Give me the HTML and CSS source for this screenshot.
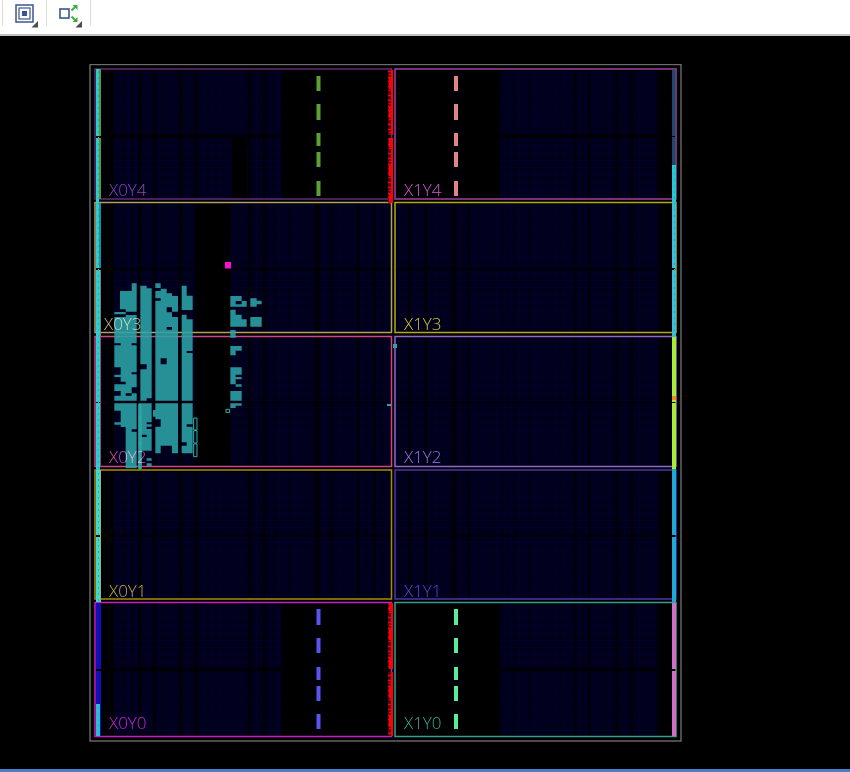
FILE: index.html
```html
<!DOCTYPE html>
<html lang="en">
<head>
<meta charset="utf-8">
<title>Device</title>
<link rel="stylesheet" href="styles.css">
</head>
<body>
<header class="toolbar">
  <button class="tool" type="button" aria-label="Fit view">
    <svg width="26" height="28" viewBox="0 0 26 28">
      <g class="ink"><rect x="4" y="5" width="17" height="17" stroke-width="1.5"/><rect x="7" y="8" width="11" height="11" stroke-width="1.2"/></g>
      <rect class="ink-fill" x="10" y="11" width="5" height="5"/>
      <path class="corner" d="M26 21V27.500H19.500Z"/>
    </svg>
  </button>
  <button class="tool" type="button" aria-label="Show connections">
    <svg width="26" height="28" viewBox="0 0 26 28">
      <rect class="ink" x="4" y="9" width="9" height="9" stroke-width="1.6"/>
      <g class="arrow"><path d="M15.500 10.500l4-4M15.500 16.500l4 4" stroke-width="2"/><path class="arrow-head" d="M16.500 5H21.500V10zM21.500 17V22H16.500z"/></g>
      <path class="corner" d="M26 21V27.500H19.500Z"/>
    </svg>
  </button>
</header>
<main class="canvas">
<svg class="device" viewBox="89 64 593 678">
  <defs>
    <pattern id="grid" x="99" y="70" width="15" height="15" patternUnits="userSpaceOnUse">
      <rect width="15" height="15" fill="#000016"/>
      <path d="M3.500 0V15M11.500 0V15M0 3.500H15M0 11.500H15" stroke="#00001e"/>
      <path d="M0 .5H15M0 7.500H15M.5 0V15M7.500 0V15" stroke="#00002e"/>
    </pattern>
    <pattern id="io" x="99" y="70" width="19" height="8" patternUnits="userSpaceOnUse"><path d="M2 2.500H7M2 6.500H6M9.500 0V8" stroke="#00001c" fill="none"/></pattern>
    <pattern id="red" x="388" y="70" width="5" height="29" patternUnits="userSpaceOnUse">
      <rect width="5" height="29" fill="#50001c"/>
      <path d="M0 1.500H4M1 4.500H5M0 7.500H5M0 11.500H4M0 16.500H5M1 20.500H5M0 25.500H4" stroke="#fa0008" stroke-width="1.500"/>
      <path d="M2 8V19" stroke="#ff0008" stroke-width="2"/>
      <path d="M4 0V29" stroke="#ff0008" stroke-width="2"/>
    </pattern>
    <pattern id="speck" x="96" y="70" width="4" height="6" patternUnits="userSpaceOnUse"><path d="M2 1h1v2H2z" fill="#20b0bc"/></pattern>
  </defs>

  <rect x="89" y="64" width="593" height="678" fill="#000"/>
  <rect x="90" y="64.500" width="591" height="676.500" class="frame"/>

  <!-- logic fabric -->
  <g fill="url(#grid)">
    <path d="M114 71H282V198H114zM500 71H657V198H500z"/>
    <path d="M114 204H197V332H114zM230 204H390V332H230zM396 204H658V332H396z"/>
    <path d="M114 338H197V465H114zM230 338H390V465H230zM396 338H658V465H396z"/>
    <path d="M114 472H390V598H114zM396 472H658V598H396z"/>
    <path d="M114 604H282V735H114zM500 604H657V735H500z"/>
  </g>
  <path fill="url(#io)" d="M99 70H114V736H99zM658 70H672V736H658z"/>
  <g class="gap">
    <path d="M139.500 70V736M154.500 70V736M180.500 70V736M195.500 70V736M249.500 70V736M264.500 70V736M631.500 70V736M617 70V736" stroke-width="3"/>
    <path d="M575.500 70V736M588.500 70V736M468.500 203V599M331.500 203V599" stroke-width="2"/>
    <path d="M317 203V599M454 203V599" stroke-width="5"/>
    <path d="M358.500 203V599M374.500 203V599M409.500 203V599M425.500 203V599" stroke-width="3"/>
    <path d="M96 136H391M396 136H676M96 669.500H391M396 669.500H676" stroke-width="4"/>
    <path d="M96 269H391M396 269H676M96 402.500H391M396 402.500H676M96 536H391M396 536H676" stroke-width="2"/>
  </g>
  <path fill="#000" d="M232 138H247V198H232z"/>
  <path d="M231.500 198V150.500H247.500V198M224.500 268V243.500H229M315.500 71V198M321.500 71V198M453.500 71V198M459.500 71V198M315.500 604V735M321.500 604V735M453.500 604V735M459.500 604V735" stroke="#000018" fill="none"/>

  <!-- clock columns -->
  <g stroke-width="4" fill="none">
    <path stroke="#5ca034" d="M318.500 76V91M318.500 104V120M318.500 133V146M318.500 152V167M318.500 181V196"/>
    <path stroke="#e08484" d="M456 76V91M456 104V120M456 133V146M456 152V167M456 181V196"/>
    <path stroke="#5854ec" d="M318.500 609V625M318.500 638V653M318.500 667V680M318.500 686V701M318.500 714V729"/>
    <path stroke="#5cec98" d="M456 609V625M456 638V653M456 667V680M456 686V701M456 714V729"/>
  </g>

  <!-- clock region outlines -->
  <g class="region">
    <rect x="95" y="69" width="296.500" height="130" stroke="#5e2e76"/>
    <rect x="395" y="69" width="281" height="130" stroke="#a040a6"/>
    <rect x="95" y="202.500" width="296.500" height="130" stroke="#b0a064"/>
    <rect x="395" y="202.500" width="281" height="130" stroke="#b0aa0c"/>
    <rect x="95" y="336.500" width="296.500" height="130" stroke="#d0468e"/>
    <rect x="395" y="336.500" width="281" height="130" stroke="#8e68d4"/>
    <rect x="95" y="470" width="296.500" height="129" stroke="#a48e0c"/>
    <rect x="395" y="470" width="281" height="129" stroke="#4c34ac"/>
    <rect x="95" y="602.500" width="296.500" height="134" stroke="#c81cc4"/>
    <rect x="395" y="602.500" width="281" height="134" stroke="#34a08c"/>
  </g>
  <path fill="url(#red)" d="M388 70H393V135H388zM388 138H393V203H388zM388 603H393V669H388zM388 672H393V736H388z"/>

  <!-- I/O banks -->
  <g>
    <path fill="#2cccd0" d="M96 69H99V136H96zM96 138H99V268H96zM96 270H100V402H96zM96 403H100V470H96z"/>
    <path fill="#579a30" d="M99 69H101V136H99zM99 138H101V199H99z"/>
    <path fill="#1890a0" d="M99 203H101V268H99z"/>
    <path fill="#8c7c68" d="M100 270H101V336H100z"/>
    <path fill="#984878" d="M100 337H101V466H100z"/>
    <path fill="#44d8c8" d="M96 470H100V535H96zM96 537H100V602H96z"/>
    <path fill="#a4b070" d="M100 470H101V602H100z"/>
    <path fill="#1010b8" d="M96 603H101V669H96zM96 671H101V736H96z"/>
    <path fill="#2cbcd8" d="M96 704H100V736H96z"/>
    <path fill="#164c66" d="M672 70H675V136H672zM672 137H675V166H672z"/>
    <path fill="#24c8d0" d="M672 165H676V202H672z"/>
    <path fill="#40bcd8" d="M672 202H676V268H672zM672 270H676V337H672z"/>
    <path fill="#a8ec38" d="M672 337H676V402H672zM672 403H676V469H672z"/>
    <path fill="#f08820" d="M672 396H676V400H672z"/>
    <path fill="#20a8d8" d="M672 469H676V535H672zM672 537H676V602H672z"/>
    <path fill="#d070c4" d="M672 603H676V669H672zM672 671H676V736H672z"/>
    <path fill="url(#speck)" d="M96 70H100V602H96zM96 705H100V736H96zM672 166H676V336H672zM672 470H676V602H672z"/>
  </g>

  <!-- placed cells, upper block then lower block, in thirds of a unit -->
  <g class="cells" transform="translate(90 195) scale(.33333)">
    <path d="M125 265H140V350H107V343H90V288H125zM73 351H107V358H73zM107 360H140V405H73V366H107z"/>
    <path d="M151 272H170V280H185V405H151z"/>
    <path d="M196 265H212V279H196zM196 288H212V281H230V295H246V303H264V350H246V337H230V352H246V366H264V405H196V317H212V310H196zM230 396V404H246V396z"/>
    <path d="M275 272H290V302H308V345H275zM275 359H290V373H308V405H275z"/>
    <path d="M421 303H455V318H470V335H421zM437 318V328H455V318zM481 310H500V317H515V328H500V335H481zM421 344H437V359H455V373H470V395H421zM481 366H515V395H481zM421 405H437V428H421z"/>
  </g>
  <g class="cells" transform="translate(90 330) scale(.33333)">
    <path d="M73 0H140V40H125V46H140V127H125V133H140V172H125V190H107V197H125V190H140V212H73V197H92V183H73V163H107V155H92V141H73V134H92V112H73V46H92V40H73z"/>
    <path d="M73 220H140V298H125V305H140V415H107V291H92V284H73V277H92V242H73z"/>
    <path d="M151 0H185V205H170V212H151V118H170V103H151zM145 220H185V277H170V283H185V290H170V297H185V362H155V418H145zM155 314V321H170V314zM170 385H185V392H170zM170 400H185V408H170z"/>
    <path d="M196 0H264V212H196zM212 85V103H230V85zM196 220H264V370H246V347H212V370H196V290H212V268H196V260H189V240H196z"/>
    <path d="M275 0H308V63H290V69H308V212H275zM275 220H308V283H290V290H308V370H275V347H290V337H275z"/>
    <path d="M421 48H455V62H437V76H421zM421 112H455V134H437V141H455V148H437V163H421zM437 163H455V170H437zM421 183H455V212H421zM421 220H455V227H437V234H421z"/>
    <path class="trace" d="M147 224H153V416H147zM147 262H153M147 300H153M147 340H153M311 264H321V300H311zM311 302H321V339H311zM311 342H321V380H311zM408 238H419V247H408z"/>
  </g>
  <path fill="#2aa4aa" d="M393 344H397V348H393zM387 404H391V406H387z"/>
  <path fill="#ff10cc" d="M225 262H231V268.500H225z"/>

  <!-- region names -->
  <g class="names">
    <text x="109" y="196" fill="#8a44a6">X0Y4</text>
    <text x="404" y="196" fill="#d058d8">X1Y4</text>
    <text x="104" y="330" fill="#c8b874">X0Y3</text>
    <text x="404" y="330" fill="#d0c81c">X1Y3</text>
    <text x="109" y="463" fill="#e04ca0">X0Y2</text>
    <text x="404" y="463" fill="#9c74e0">X1Y2</text>
    <text x="109" y="597" fill="#c8ac14">X0Y1</text>
    <text x="404" y="597" fill="#5c42d4">X1Y1</text>
    <text x="109" y="729" fill="#d020d0">X0Y0</text>
    <text x="404" y="729" fill="#3caa94">X1Y0</text>
  </g>
</svg>
</main>
</body>
</html>
```
FILE: styles.css
```css
* { box-sizing: border-box; }
body {
  margin: 0;
  min-height: 100vh;
  display: flex;
  flex-direction: column;
  background: #000;
  font-family: "Open Sans", "Liberation Sans", sans-serif;
}
.toolbar {
  display: flex;
  height: 36px;
  padding-left: 2px;
  background: #fff;
  border-bottom: 2px solid #c0c0c0;
  flex-shrink: 0;
}
.tool {
  display: flex;
  width: 44px;
  height: 26px;
  margin: 0;
  padding: 0 0 0 9px;
  border: 0;
  border-left: 1px solid #dcdcdc;
  background: none;
}
.tool:last-child { width: 45px; border-right: 1px solid #dcdcdc; }
.tool svg { display: block; flex-shrink: 0; }
.ink { fill: none; stroke: #3b558f; }
.ink-fill { fill: #3b558f; }
.corner { fill: #4c4c4c; }
.arrow { stroke: #3cb043; fill: none; }
.arrow-head { fill: #3cb043; stroke: none; }
.canvas {
  flex: 1;
  display: flex;
  justify-content: center;
  align-items: flex-start;
  padding: 28px 79px 27px 0;
  border-bottom: 3px solid #4a80c8;
}
.device { display: block; width: 593px; max-width: 100%; }
.frame { fill: none; stroke: #6c6c6c; stroke-width: 1.4; }
.gap { fill: none; stroke: #000; stroke-opacity: .7; }
.region { fill: none; stroke-width: 1.5; }
.names { font-size: 17px; font-weight: 300; mix-blend-mode: screen; }
.cells { fill: #2ba4a8; fill-opacity: .88; fill-rule: evenodd; }
.trace { fill: none; stroke: #30b4ac; stroke-width: 3; }
```
